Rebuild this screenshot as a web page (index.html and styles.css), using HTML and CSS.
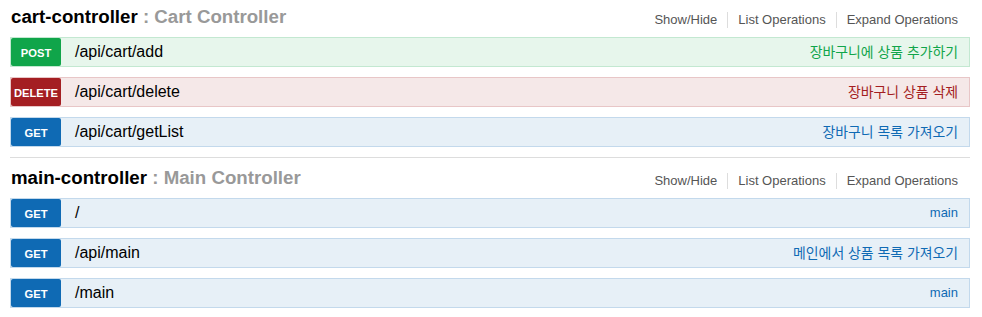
FILE: index.html
```html
<!DOCTYPE html>
<html lang="ko">
<head>
<meta charset="utf-8">
<title>Swagger</title>
<link rel="stylesheet" href="styles.css">
</head>
<body>
<div class="wrap">
  <section class="resource">
    <div class="res-head">
      <h2 class="res-title"><span class="res-name">cart-controller</span><span class="res-desc"> : Cart Controller</span></h2>
      <ul class="options">
        <li>Show/Hide</li>
        <li>List Operations</li>
        <li>Expand Operations</li>
      </ul>
    </div>
    <ul class="ops">
      <li class="op post"><span class="method">POST</span><span class="path">/api/cart/add</span><span class="summary ko">장바구니에 상품 추가하기</span></li>
      <li class="op delete"><span class="method">DELETE</span><span class="path">/api/cart/delete</span><span class="summary ko">장바구니 상품 삭제</span></li>
      <li class="op get"><span class="method">GET</span><span class="path">/api/cart/getList</span><span class="summary ko">장바구니 목록 가져오기</span></li>
    </ul>
  </section>
  <section class="resource">
    <div class="res-head">
      <h2 class="res-title"><span class="res-name">main-controller</span><span class="res-desc"> : Main Controller</span></h2>
      <ul class="options">
        <li>Show/Hide</li>
        <li>List Operations</li>
        <li>Expand Operations</li>
      </ul>
    </div>
    <ul class="ops">
      <li class="op get"><span class="method">GET</span><span class="path">/</span><span class="summary">main</span></li>
      <li class="op get"><span class="method">GET</span><span class="path">/api/main</span><span class="summary ko">메인에서 상품 목록 가져오기</span></li>
      <li class="op get"><span class="method">GET</span><span class="path">/main</span><span class="summary">main</span></li>
    </ul>
  </section>
</div>
</body>
</html>
```
FILE: styles.css
```css
* { box-sizing: border-box; }
html, body { margin: 0; padding: 0; background: #fff; }
body {
  font-family: Arial, "Liberation Sans", "Noto Sans CJK KR", sans-serif;
  color: #000;
}
.wrap {
  width: 960px;
  margin: -3px 0 0 10px;
}
.resource {
  border-bottom: 1px solid #ddd;
}
.res-head {
  display: flex;
  justify-content: space-between;
  align-items: flex-start;
  height: 40px;
}
.res-title {
  margin: 0;
  padding: 9px 0 0 1px;
  font-size: 18.7px;
  line-height: 22px;
  font-weight: bold;
  white-space: pre;
}
.res-name { color: #000; }
.res-desc { color: #999; }
.options {
  list-style: none;
  margin: 15px 0 0 0;
  padding: 0;
  display: flex;
}
.options li {
  font-size: 13px;
  line-height: 16px;
  color: #555;
  padding: 0 10px;
  border-right: 1px solid #ddd;
}
.options li:last-child { border-right: none; padding-right: 12px; }
.ops {
  list-style: none;
  margin: 0;
  padding: 0;
}
.op {
  display: flex;
  align-items: flex-start;
  height: 30px;
  margin-bottom: 10px;
  border: 1px solid;
}
.method {
  width: 50px;
  height: 28px;
  padding-top: 3px;
  line-height: 25px;
  font-size: 11.2px;
  font-weight: bold;
  color: #fff;
  text-align: center;
  border-radius: 2px;
  flex: none;
}
.path {
  margin-left: 14px;
  font-size: 16px;
  line-height: 28px;
  color: #000;
}
.summary {
  margin-left: auto;
  padding-right: 11px;
  font-size: 13px;
  line-height: 28px;
}
.summary.ko { font-size: 13.9px; }
.post { background: #e7f6ec; border-color: #c3e8d1; }
.post .method { background: #10a54a; }
.post .summary { color: #10a54a; }
.delete { background: #f5e8e8; border-color: #e8c6c7; }
.delete .method { background: #a41e22; }
.delete .summary { color: #a41e22; }
.get { background: #e7f0f7; border-color: #c3d9ec; }
.get .method { background: #0f6ab4; }
.get .summary { color: #0f6ab4; }
```
